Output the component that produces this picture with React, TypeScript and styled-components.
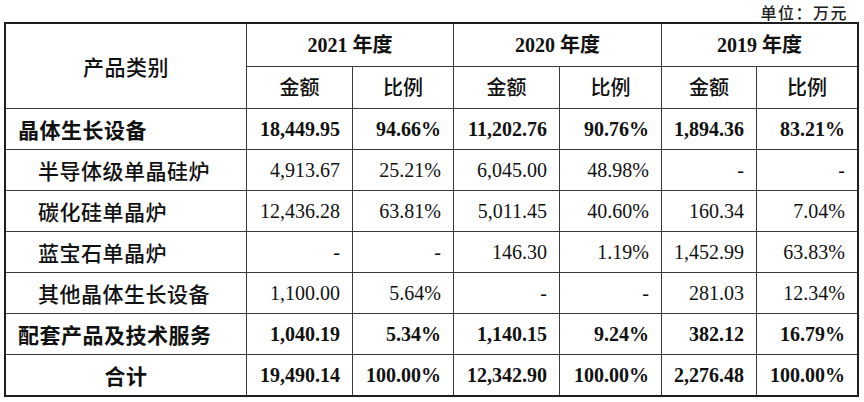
import React from "react";
import styled, { createGlobalStyle } from "styled-components";

const Global = createGlobalStyle`
  html, body { margin: 0; padding: 0; background: #ffffff; }
  body { font-family: "Liberation Serif", "Noto Sans CJK SC", serif; color: #111; }
`;

const Page = styled.div`
  width: 864px;
  height: 402px;
  padding: 0 5px 0 4px;
  box-sizing: border-box;
  display: flex;
  flex-direction: column;
`;

const Unit = styled.div`
  height: 22px;
  flex-shrink: 0;
  display: flex;
  align-items: flex-start;
  justify-content: flex-end;
  padding: 0 11px 0 0;
  box-sizing: border-box;
  font-family: "Noto Sans CJK SC", sans-serif;
  font-size: 16px;
  font-weight: 500;
  line-height: 24px;
  color: #222;
  letter-spacing: 1.5px;
`;

const Table = styled.table`
  border-collapse: collapse;
  table-layout: fixed;
  width: 855px;
  border: 2px solid #1e1e1e;
  background: #ffffff;
  position: relative;
`;

const HeadCell = styled.th<{ $h: number }>`
  height: ${(p) => p.$h}px;
  padding: 0;
  border: 1px solid #3a3a3a;
  text-align: center;
  vertical-align: middle;
  font-size: 20px;
  line-height: 1;
  font-weight: ${(p) => (p.$h > 41 ? 700 : 500)};
  color: #111;
`;

const LabelHead = styled(HeadCell)`
  font-family: "Noto Sans CJK SC", sans-serif;
  font-size: 21px;
  font-weight: 500;
  letter-spacing: 0.5px;
`;

const Cell = styled.td<{ $bold?: boolean }>`
  height: 40px;
  padding: 0 12px 0 0;
  border: 1px solid #3a3a3a;
  text-align: right;
  vertical-align: middle;
  font-size: 20px;
  line-height: 1;
  font-weight: ${(p) => (p.$bold ? 700 : 400)};
  color: #111;
  white-space: nowrap;
`;

const LabelCell = styled.td<{ $bold?: boolean; $kind: "top" | "sub" | "total" }>`
  height: 40px;
  padding: 0 0 0 ${(p) => (p.$kind === "sub" ? 32 : p.$kind === "top" ? 12 : 0)}px;
  border: 1px solid #3a3a3a;
  text-align: ${(p) => (p.$kind === "total" ? "center" : "left")};
  vertical-align: middle;
  font-family: "Noto Sans CJK SC", sans-serif;
  font-size: 21px;
  line-height: 1;
  letter-spacing: 0.5px;
  font-weight: ${(p) => (p.$bold ? 700 : 500)};
  color: #111;
  white-space: nowrap;
`;

type Row = {
  label: string;
  kind: "top" | "sub" | "total";
  values: string[];
};

const rows: Row[] = [
  { label: "晶体生长设备", kind: "top", values: ["18,449.95", "94.66%", "11,202.76", "90.76%", "1,894.36", "83.21%"] },
  { label: "半导体级单晶硅炉", kind: "sub", values: ["4,913.67", "25.21%", "6,045.00", "48.98%", "-", "-"] },
  { label: "碳化硅单晶炉", kind: "sub", values: ["12,436.28", "63.81%", "5,011.45", "40.60%", "160.34", "7.04%"] },
  { label: "蓝宝石单晶炉", kind: "sub", values: ["-", "-", "146.30", "1.19%", "1,452.99", "63.83%"] },
  { label: "其他晶体生长设备", kind: "sub", values: ["1,100.00", "5.64%", "-", "-", "281.03", "12.34%"] },
  { label: "配套产品及技术服务", kind: "top", values: ["1,040.19", "5.34%", "1,140.15", "9.24%", "382.12", "16.79%"] },
  { label: "合计", kind: "total", values: ["19,490.14", "100.00%", "12,342.90", "100.00%", "2,276.48", "100.00%"] },
];

const widths = [241.5, 106, 101, 106, 102, 95, 101.5];
const years = ["2021", "2020", "2019"];

export default function App() {
  return (
    <>
      <Global />
      <Page>
        <Unit>单位：万元</Unit>
        <Table>
          <colgroup>
            {widths.map((w, i) => (
              <col key={i} style={{ width: w }} />
            ))}
          </colgroup>
          <thead>
            <tr>
              <LabelHead $h={42} rowSpan={2}>产品类别</LabelHead>
              {years.map((y) => (
                <HeadCell $h={42} colSpan={2} key={y}>
                  {y} 年度
                </HeadCell>
              ))}
            </tr>
            <tr>
              {years.map((y) => (
                <React.Fragment key={y}>
                  <HeadCell $h={41}>金额</HeadCell>
                  <HeadCell $h={41}>比例</HeadCell>
                </React.Fragment>
              ))}
            </tr>
          </thead>
          <tbody>
            {rows.map((r) => {
              const bold = r.kind !== "sub";
              return (
                <tr key={r.label}>
                  <LabelCell $kind={r.kind} $bold={bold}>
                    {r.label}
                  </LabelCell>
                  {r.values.map((v, i) => (
                    <Cell key={i} $bold={bold}>
                      {v}
                    </Cell>
                  ))}
                </tr>
              );
            })}
          </tbody>
        </Table>
      </Page>
    </>
  );
}
